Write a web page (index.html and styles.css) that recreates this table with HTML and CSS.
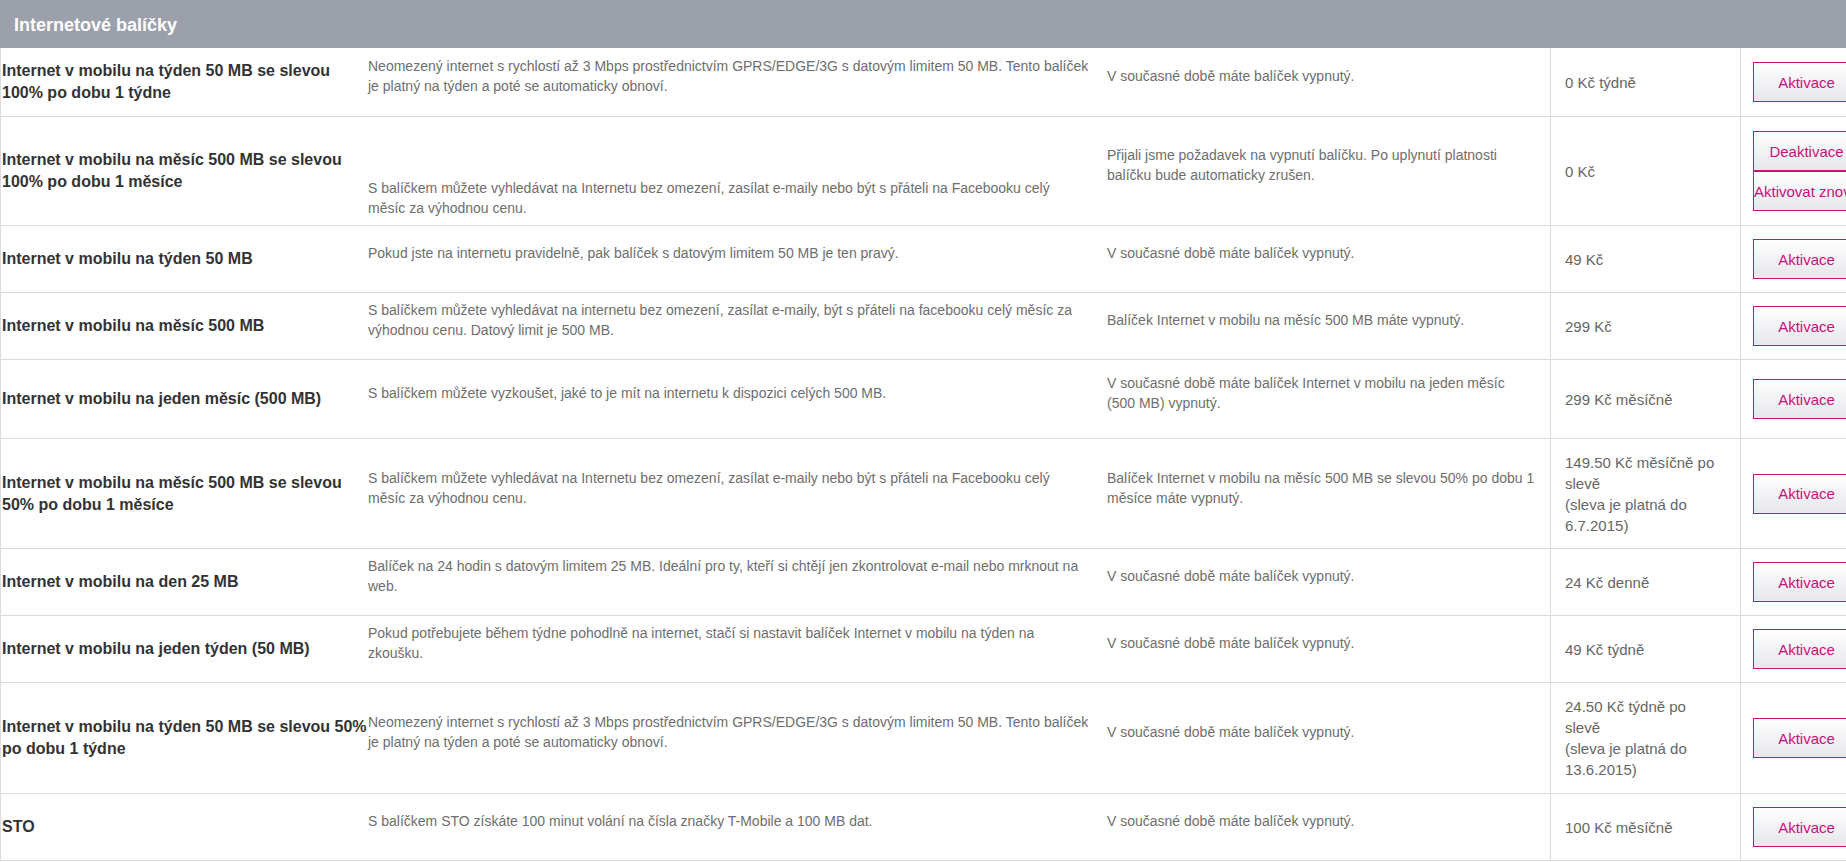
FILE: index.html
```html
<!DOCTYPE html>
<html lang="cs">
<head>
<meta charset="utf-8">
<title>Internetové balíčky</title>
<link rel="stylesheet" href="styles.css">
</head>
<body>
<section class="packages">
  <h2 class="packages-title">Internetové balíčky</h2>

  <div class="row">
    <div class="cell name name-tall">Internet v mobilu na týden 50 MB se slevou 100% po dobu 1 týdne</div>
    <div class="cell desc">Neomezený internet s rychlostí až 3 Mbps prostřednictvím GPRS/EDGE/3G s datovým limitem 50 MB. Tento balíček je platný na týden a poté se automaticky obnoví.</div>
    <div class="cell status">V současné době máte balíček vypnutý.</div>
    <div class="cell price">0 Kč týdně</div>
    <div class="cell actions"><button class="btn">Aktivace</button></div>
  </div>

  <div class="row">
    <div class="cell name">Internet v mobilu na měsíc 500 MB se slevou 100% po dobu 1 měsíce</div>
    <div class="cell desc desc-low">S balíčkem můžete vyhledávat na Internetu bez omezení, zasílat e-maily nebo být s přáteli na Facebooku celý měsíc za výhodnou cenu.</div>
    <div class="cell status">Přijali jsme požadavek na vypnutí balíčku. Po uplynutí platnosti balíčku bude automaticky zrušen.</div>
    <div class="cell price">0 Kč</div>
    <div class="cell actions"><button class="btn">Deaktivace</button><button class="btn">Aktivovat znovu</button></div>
  </div>

  <div class="row">
    <div class="cell name">Internet v mobilu na týden 50 MB</div>
    <div class="cell desc">Pokud jste na internetu pravidelně, pak balíček s datovým limitem 50 MB je ten pravý.</div>
    <div class="cell status">V současné době máte balíček vypnutý.</div>
    <div class="cell price">49 Kč</div>
    <div class="cell actions"><button class="btn">Aktivace</button></div>
  </div>

  <div class="row">
    <div class="cell name">Internet v mobilu na měsíc 500 MB</div>
    <div class="cell desc">S balíčkem můžete vyhledávat na internetu bez omezení, zasílat e-maily, být s přáteli na facebooku celý měsíc za výhodnou cenu. Datový limit je 500 MB.</div>
    <div class="cell status">Balíček Internet v mobilu na měsíc 500 MB máte vypnutý.</div>
    <div class="cell price">299 Kč</div>
    <div class="cell actions"><button class="btn">Aktivace</button></div>
  </div>

  <div class="row">
    <div class="cell name">Internet v mobilu na jeden měsíc (500 MB)</div>
    <div class="cell desc">S balíčkem můžete vyzkoušet, jaké to je mít na internetu k dispozici celých 500 MB.</div>
    <div class="cell status">V současné době máte balíček Internet v mobilu na jeden měsíc (500 MB) vypnutý.</div>
    <div class="cell price">299 Kč měsíčně</div>
    <div class="cell actions"><button class="btn">Aktivace</button></div>
  </div>

  <div class="row">
    <div class="cell name">Internet v mobilu na měsíc 500 MB se slevou 50% po dobu 1 měsíce</div>
    <div class="cell desc">S balíčkem můžete vyhledávat na Internetu bez omezení, zasílat e-maily nebo být s přáteli na Facebooku celý měsíc za výhodnou cenu.</div>
    <div class="cell status">Balíček Internet v mobilu na měsíc 500 MB se slevou 50% po dobu 1 měsíce máte vypnutý.</div>
    <div class="cell price">149.50 Kč měsíčně po slevě<br>(sleva je platná do 6.7.2015)</div>
    <div class="cell actions"><button class="btn">Aktivace</button></div>
  </div>

  <div class="row">
    <div class="cell name">Internet v mobilu na den 25 MB</div>
    <div class="cell desc">Balíček na 24 hodin s datovým limitem 25 MB. Ideální pro ty, kteří si chtějí jen zkontrolovat e-mail nebo mrknout na web.</div>
    <div class="cell status">V současné době máte balíček vypnutý.</div>
    <div class="cell price">24 Kč denně</div>
    <div class="cell actions"><button class="btn">Aktivace</button></div>
  </div>

  <div class="row">
    <div class="cell name">Internet v mobilu na jeden týden (50 MB)</div>
    <div class="cell desc">Pokud potřebujete během týdne pohodlně na internet, stačí si nastavit balíček Internet v mobilu na týden na zkoušku.</div>
    <div class="cell status">V současné době máte balíček vypnutý.</div>
    <div class="cell price">49 Kč týdně</div>
    <div class="cell actions"><button class="btn">Aktivace</button></div>
  </div>

  <div class="row">
    <div class="cell name">Internet v mobilu na týden 50 MB se slevou 50% po dobu 1 týdne</div>
    <div class="cell desc">Neomezený internet s rychlostí až 3 Mbps prostřednictvím GPRS/EDGE/3G s datovým limitem 50 MB. Tento balíček je platný na týden a poté se automaticky obnoví.</div>
    <div class="cell status">V současné době máte balíček vypnutý.</div>
    <div class="cell price price-tall">24.50 Kč týdně po slevě<br>(sleva je platná do 13.6.2015)</div>
    <div class="cell actions"><button class="btn">Aktivace</button></div>
  </div>

  <div class="row">
    <div class="cell name">STO</div>
    <div class="cell desc">S balíčkem STO získáte 100 minut volání na čísla značky T-Mobile a 100 MB dat.</div>
    <div class="cell status">V současné době máte balíček vypnutý.</div>
    <div class="cell price">100 Kč měsíčně</div>
    <div class="cell actions"><button class="btn">Aktivace</button></div>
  </div>
</section>
</body>
</html>
```

FILE: styles.css
```css
* { box-sizing: border-box; }

html, body {
  margin: 0;
  padding: 0;
  overflow: hidden;
  background: #ffffff;
}

body {
  font-family: "Liberation Sans", Arial, sans-serif;
  color: #6b6b6b;
}

.packages {
  width: 1880px;
}

.packages-title {
  margin: 0;
  height: 48px;
  padding: 3px 0 0 14px;
  display: flex;
  align-items: center;
  background: #9ba0ab;
  color: #ffffff;
  font-size: 18px;
  font-weight: bold;
}

.row {
  display: grid;
  grid-template-columns: 367px 732px 450px 190px 140px;
  border-left: 1px solid #dcdcdc;
  border-bottom: 1px solid #dcdcdc;
}

.cell {
  display: flex;
  flex-direction: column;
  justify-content: center;
}

.name {
  padding: 11px 0 11px 1px;
  font-size: 16px;
  line-height: 22px;
  font-weight: bold;
  color: #333333;
}

.name-tall {
  padding-top: 12px;
  padding-bottom: 12px;
}

.desc {
  padding: 7px 9.5px 19px 0;
  font-size: 14px;
  line-height: 20px;
  color: #6e6e6e;
}

.desc-low {
  padding-top: 61px;
  padding-bottom: 7px;
}

.status {
  padding: 13px 14.5px 25px 7px;
  font-size: 14px;
  line-height: 20px;
  color: #6e6e6e;
}

.price {
  border-left: 1px solid #dcdcdc;
  padding: 13px 15px 12px 14px;
  font-size: 15px;
  line-height: 21px;
  color: #666666;
}

.price-tall {
  padding-bottom: 13px;
}

.actions {
  border-left: 1px solid #dcdcdc;
  padding: 13px 0 13px 12px;
  align-items: flex-start;
}

.btn {
  display: block;
  width: 107px;
  height: 40px;
  margin: 0;
  padding: 0;
  border: 1px solid #c4137a;
  border-radius: 0;
  background: linear-gradient(#ffffff, #e7e7ec);
  color: #c4137a;
  font-family: "Liberation Sans", Arial, sans-serif;
  font-size: 15px;
  white-space: nowrap;
  text-align: center;
  cursor: pointer;
}
```
